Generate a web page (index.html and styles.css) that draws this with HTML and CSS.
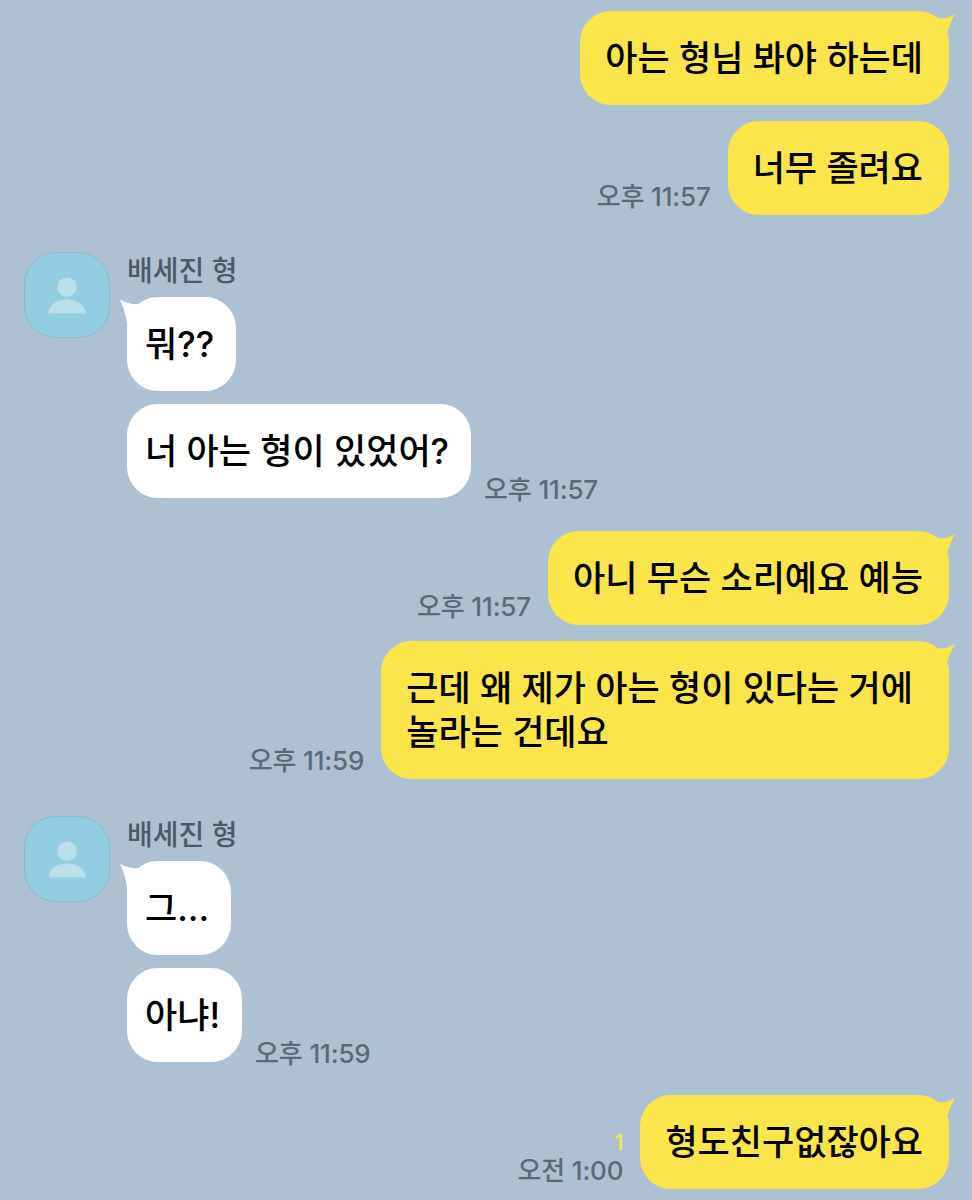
FILE: index.html
```html
<!DOCTYPE html>
<html lang="ko">
<head>
    <meta charset="UTF-8">
    <meta name="viewport" content="width=device-width, initial-scale=1.0">
    <title>채팅</title>
    <link rel="stylesheet" href="styles.css">
</head>
<body>
    <div class="chat">
        <div class="group mine first">
            <div class="row">
                <div class="bubble yellow">
                    <svg class="tail tail-right" viewBox="0 0 22 20"><path d="M0 3C5 5.500 11 5 20 0C18 4 15 9 12 19L0 14Z"/></svg>
                    아는 형님 봐야 하는데
                </div>
            </div>
            <div class="row">
                <span class="time">오후 11:57</span>
                <div class="bubble yellow">너무 졸려요</div>
            </div>
        </div>

        <div class="group peer">
            <div class="avatar">
                <svg viewBox="0 0 86 86"><circle cx="43" cy="35" r="10"/><path d="M24 62C24 53 33 47.500 43 47.500C53 47.500 62 53 62 62Z"/></svg>
            </div>
            <div class="messages">
                <div class="name">배세진 형</div>
                <div class="row">
                    <div class="bubble white">
                        <svg class="tail tail-left" viewBox="0 0 22 34"><path d="M0 0C7 3 13 5 20 4V30H8C7 20 5 10 0 0Z"/></svg>
                        뭐??
                    </div>
                </div>
                <div class="row">
                    <div class="bubble white">너 아는 형이 있었어?</div>
                    <span class="time">오후 11:57</span>
                </div>
            </div>
        </div>

        <div class="group mine">
            <div class="row">
                <span class="time">오후 11:57</span>
                <div class="bubble yellow">
                    <svg class="tail tail-right" viewBox="0 0 22 20"><path d="M0 3C5 5.500 11 5 20 0C18 4 15 9 12 19L0 14Z"/></svg>
                    아니 무슨 소리예요 예능
                </div>
            </div>
            <div class="row">
                <span class="time">오후 11:59</span>
                <div class="bubble yellow wide">
                    <svg class="tail tail-right" viewBox="0 0 22 20"><path d="M0 3C5 5.500 11 5 20 0C18 4 15 9 12 19L0 14Z"/></svg>
                    근데 왜 제가 아는 형이 있다는 거에<br>놀라는 건데요
                </div>
            </div>
        </div>

        <div class="group peer">
            <div class="avatar">
                <svg viewBox="0 0 86 86"><circle cx="43" cy="35" r="10"/><path d="M24 62C24 53 33 47.500 43 47.500C53 47.500 62 53 62 62Z"/></svg>
            </div>
            <div class="messages">
                <div class="name">배세진 형</div>
                <div class="row">
                    <div class="bubble white">
                        <svg class="tail tail-left" viewBox="0 0 22 34"><path d="M0 0C7 3 13 5 20 4V30H8C7 20 5 10 0 0Z"/></svg>
                        그...
                    </div>
                </div>
                <div class="row">
                    <div class="bubble white">아냐!</div>
                    <span class="time">오후 11:59</span>
                </div>
            </div>
        </div>

        <div class="group mine">
            <div class="row">
                <div class="meta">
                    <span class="unread">1</span>
                    <span class="time">오전 1:00</span>
                </div>
                <div class="bubble yellow">
                    <svg class="tail tail-right" viewBox="0 0 22 20"><path d="M0 3C5 5.500 11 5 20 0C18 4 15 9 12 19L0 14Z"/></svg>
                    형도친구없잖아요
                </div>
            </div>
        </div>
    </div>
</body>
</html>
```

FILE: styles.css
```css
body {
    margin: 0;
    background: #aec1d2;
    font-family: Inter, "Noto Sans CJK KR", sans-serif;
    color: #000;
}
.chat {
    height: 1200px;
    padding: 0 23px 0 24px;
    box-sizing: border-box;
    overflow: hidden;
}
.group {
    margin-top: 33px;
}
.group.first {
    margin-top: 11px;
}
.group.peer {
    display: flex;
    gap: 17px;
    margin-top: 37px;
}
.mine {
    display: flex;
    flex-direction: column;
    gap: 16px;
}
.mine .row {
    justify-content: flex-end;
    gap: 17px;
}
.row {
    display: flex;
    align-items: flex-end;
    gap: 13px;
}
.messages {
    display: flex;
    flex-direction: column;
    gap: 13px;
}
.name {
    height: 32px;
    font-size: 28px;
    line-height: 38px;
    font-weight: 500;
    color: #4b5a68;
}
.avatar {
    width: 86px;
    height: 86px;
    box-sizing: border-box;
    flex: none;
    background: #93cde1;
    border: 1px solid #85bcd0;
    border-radius: 32px;
}
.avatar svg {
    display: block;
    width: 84px;
    height: 84px;
    fill: #bbe0ec;
}
.bubble {
    position: relative;
    padding: 25px 26px 25px 25px;
    border-radius: 31px;
    font-size: 35px;
    line-height: 44px;
    font-weight: 500;
}
.yellow {
    background: #fae54b;
}
.yellow.wide {
    padding-right: 36px;
}
.white {
    padding: 25px 22px 25px 18px;
    background: #fff;
}
.tail {
    position: absolute;
}
.tail-right {
    top: 3px;
    right: -8px;
    width: 22px;
    height: 20px;
    fill: #fae54b;
}
.tail-left {
    top: 3px;
    left: -7px;
    width: 22px;
    height: 34px;
    fill: #fff;
}
.time {
    margin-bottom: 4px;
    font-size: 26px;
    line-height: 28px;
    font-weight: 500;
    letter-spacing: -0.15px;
    color: #5b6a77;
    white-space: nowrap;
}
.messages .time {
    margin-bottom: -6px;
}
.meta {
    display: flex;
    flex-direction: column;
    align-items: flex-end;
}
.unread {
    margin-bottom: 3px;
    font-size: 22px;
    line-height: 24px;
    font-weight: 500;
    color: #fae54b;
}
```
